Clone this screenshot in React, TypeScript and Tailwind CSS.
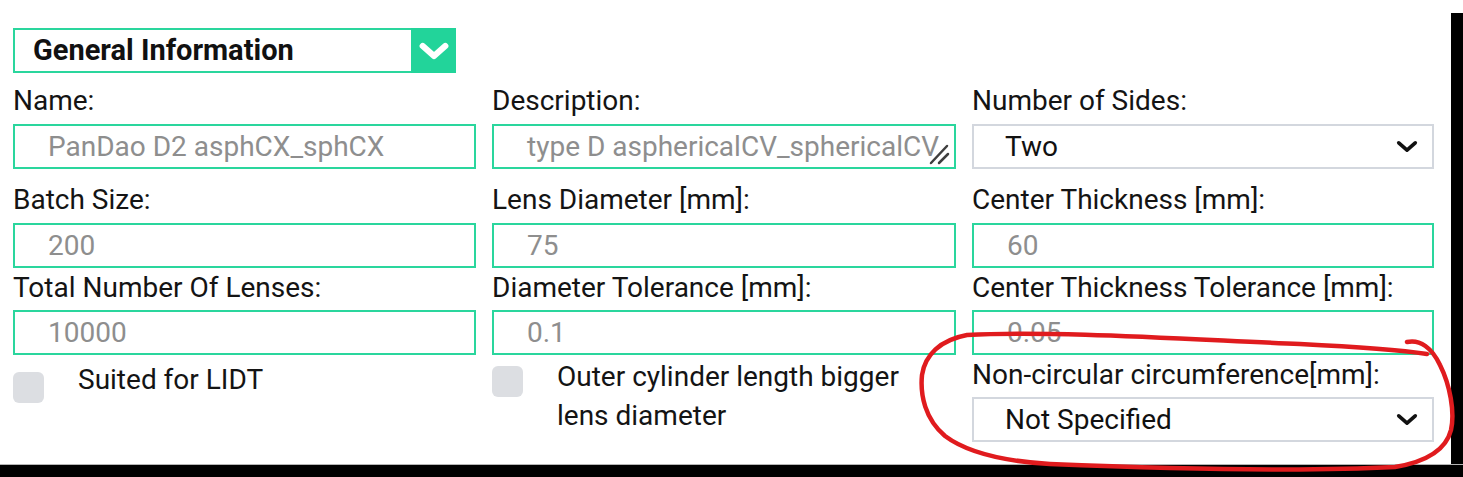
import React from "react";

const GREEN = "border-[#2ad69d]";

const Label = ({ text }: { text: string }) => (
  <div className="text-[28px] leading-[32px] text-[#141414] whitespace-nowrap">{text}</div>
);

const TextField = ({ label, value, gap }: { label: string; value: string; gap: string }) => (
  <div className="flex flex-col">
    <Label text={label} />
    <div
      className={`${gap} h-[45px] border-2 ${GREEN} pl-[33px] flex items-center text-[28px] text-[#8e8e8e] whitespace-nowrap overflow-hidden`}
    >
      {value}
    </div>
  </div>
);

const Chevron = ({ className, w = 4 }: { className: string; w?: number }) => (
  <svg viewBox="0 0 24 14" className={className} fill="none">
    <path d="M3 3 L12 11 L21 3" stroke="currentColor" strokeWidth={w} strokeLinecap="round" strokeLinejoin="round" />
  </svg>
);

const SelectField = ({ label, value, labelGap, gap }: { label: string; value: string; labelGap: string; gap: string }) => (
  <div className={`flex flex-col ${labelGap}`}>
    <Label text={label} />
    <div className={`${gap} h-[45px] border-2 border-[#d3d7de] pl-[31px] pr-[14px] flex items-center justify-between text-[28px] text-[#111]`}>
      <span>{value}</span>
      <Chevron className="w-[22px] h-[13px] text-[#111]" />
    </div>
  </div>
);

const Checkbox = ({ children, top }: { children: React.ReactNode; top: string }) => (
  <div className="flex items-start">
    <div className={`${top} w-[31px] h-[31px] rounded-[6px] bg-[#dcdee2] shrink-0`} />
    <div className="ml-[34px] text-[28px] leading-[39px] text-[#141414]">{children}</div>
  </div>
);

export default function App() {
  return (
    <div className="relative w-[1463px] h-[477px] bg-white overflow-hidden font-['Roboto',sans-serif]">
      <div className="flex h-[464px]">
        <div className="w-[1451px] pl-[13px] pt-[28px]">
          {/* header */}
          <div className="flex w-[443px] h-[45px]">
            <div className={`flex-1 border-2 border-r-0 ${GREEN} pl-[18px] flex items-center text-[29px] font-bold text-[#111]`}>
              General Information
            </div>
            <div className="w-[45px] h-full bg-[#22d49a] flex items-center justify-center">
              <Chevron className="w-[30px] h-[18px] text-white" w={5} />
            </div>
          </div>

          {/* row 1 */}
          <div className="grid grid-cols-[463px_464px_462px] gap-x-[16px] mt-[12px]">
            <TextField label="Name:" value="PanDao D2 asphCX_sphCX" gap="mt-[7px]" />
            <div className="flex flex-col">
              <Label text="Description:" />
              <div className={`relative mt-[7px] h-[45px] border-2 ${GREEN} pl-[33px] flex items-center text-[28px] text-[#8e8e8e] whitespace-nowrap overflow-hidden`}>
                type D asphericalCV_sphericalCV
                <svg viewBox="0 0 24 22" className="absolute right-[3px] bottom-[2px] w-[24px] h-[22px]">
                  <path d="M20 3 L4 20" stroke="#3f3f3f" strokeWidth="2.5" strokeLinecap="round" />
                  <path d="M21 11 L12 20" stroke="#3f3f3f" strokeWidth="2.5" strokeLinecap="round" />
                </svg>
              </div>
            </div>
            <SelectField label="Number of Sides:" value="Two" labelGap="" gap="mt-[7px]" />
          </div>

          {/* row 2 */}
          <div className="grid grid-cols-[463px_464px_462px] gap-x-[16px] mt-[15px]">
            <TextField label="Batch Size:" value="200" gap="mt-[7px]" />
            <TextField label="Lens Diameter [mm]:" value="75" gap="mt-[7px]" />
            <TextField label="Center Thickness [mm]:" value="60" gap="mt-[7px]" />
          </div>

          {/* row 3 */}
          <div className="grid grid-cols-[463px_464px_462px] gap-x-[16px] mt-[4px]">
            <TextField label="Total Number Of Lenses:" value="10000" gap="mt-[6px]" />
            <TextField label="Diameter Tolerance [mm]:" value="0.1" gap="mt-[6px]" />
            <TextField label="Center Thickness Tolerance [mm]:" value="0.05" gap="mt-[6px]" />
          </div>

          {/* row 4 */}
          <div className="grid grid-cols-[463px_464px_462px] gap-x-[16px]">
            <div className="mt-[5px]">
              <Checkbox top="mt-[12px]">Suited for LIDT</Checkbox>
            </div>
            <div className="mt-[2px]">
              <Checkbox top="mt-[9px]">
                Outer cylinder length bigger
                <br />
                lens diameter
              </Checkbox>
            </div>
            <SelectField label="Non-circular circumference[mm]:" value="Not Specified" labelGap="mt-[4px]" gap="mt-[6px]" />
          </div>
        </div>
        <div className="w-[12px] flex flex-col">
          <div className="h-[13px] bg-white" />
          <div className="flex-1 bg-black" />
        </div>
      </div>
      <div className="h-[13px] bg-black border-t border-[#b5b5b5]" />

      {/* hand-drawn annotation */}
      <svg className="absolute inset-0 pointer-events-none" width="1463" height="477" viewBox="0 0 1463 477" fill="none">
        <path
          d="M1407,342 C1420,339 1432,348 1440,365 C1450,385 1455,412 1451,430 C1446,450 1425,462 1395,467 C1300,472 1150,468 1050,464 C1000,461 965,451 945,436 C925,419 920,395 922,375 C925,355 940,340 967,335 C1050,330 1200,340 1300,344 C1360,347 1400,350 1427,354"
          stroke="#e01b1e"
          strokeWidth="4.5"
          strokeLinecap="round"
          strokeLinejoin="round"
        />
      </svg>
    </div>
  );
}
